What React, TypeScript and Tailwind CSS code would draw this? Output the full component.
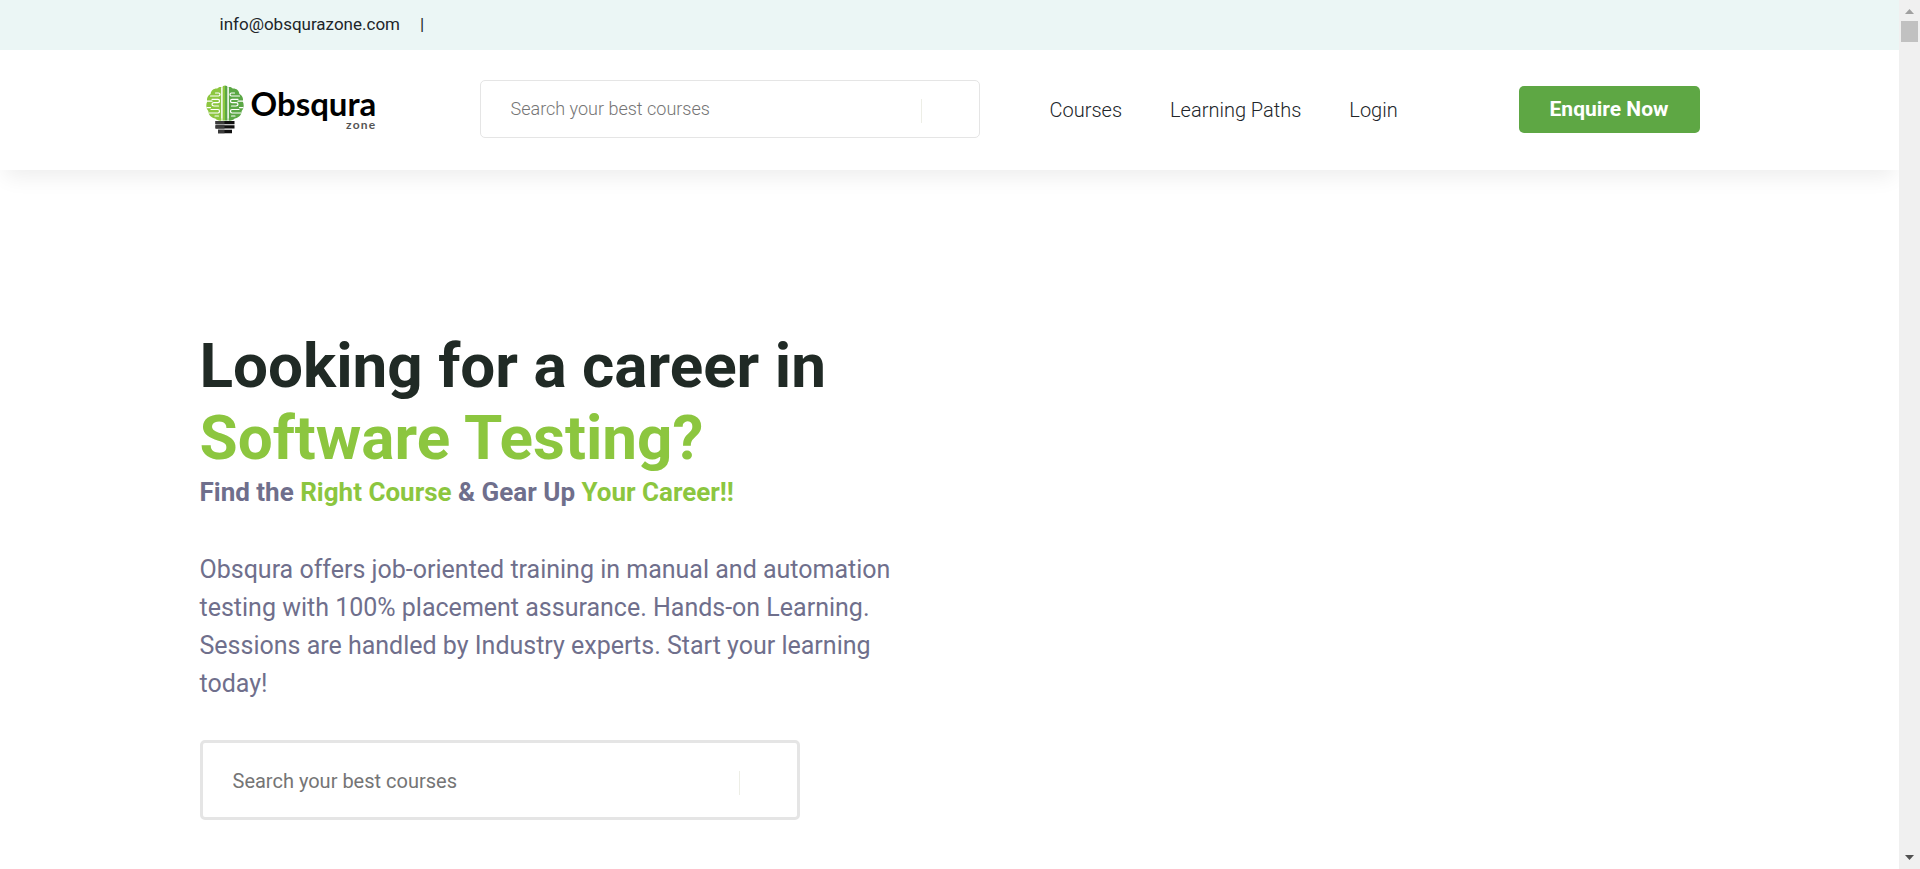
import { useId } from "react";

function BulbLogo() {
  return (
    <svg viewBox="0 0 38 49" className="h-[49px] w-[38px] shrink-0" aria-hidden="true">
      <path d="M15.400 2C13.500 1.800 12 2.300 11.300 3.600 7.500 3.400 5 5.500 4.600 9 1.500 10.500.5 13.500 1.200 16.500-.2 19.500 0 23.500 2.300 26c.1 4.500 3.600 7 7 7.600 1.300 1.600 3.800 2.200 6.100 2z" fill="#8cc63f" />
      <path d="M22.600 2C24.500 1.800 26 2.300 26.700 3.600 30.500 3.400 33 5.500 33.400 9c3.100 1.500 4.100 4.500 3.400 7.500 1.400 3 1.200 7-1.100 9.500-.1 4.500-3.600 7-7 7.600-1.300 1.600-3.800 2.200-6.100 2z" fill="#5ba745" />
      <path d="M16.500 2Q16.500.4 19 .4V35.600H16.500z" fill="#8cc63f" />
      <path d="M19 .4Q21.500.4 21.500 2V35.600H19z" fill="#5ba745" />
      <g fill="none" stroke="#fff" strokeWidth="1.200" strokeLinecap="round">
        <path d="M15.800 3V33M22.200 3V33" strokeWidth=".9" />
        <path d="M4.500 11H12.500Q14 11 14 9.500T12.500 8H9.500M.8 16.200H6M6 14.300H12Q13.500 14.300 13.500 16T12 17.700H8Q6 17.700 6 19.300T8 21H12.500M1 22.600H4.500M5 24.500H12Q13.500 24.500 13.500 26.200T12 28H3M9 31H12.500" />
        <path d="M33.500 11H25.500Q24 11 24 9.500T25.500 8H28.500M37.200 16.200H32M32 14.300H26Q24.500 14.300 24.500 16T26 17.700H30Q32 17.700 32 19.300T30 21H25.500M37 22.600H33.500M33 24.500H26Q24.500 24.500 24.500 26.200T26 28H35M29 31H25.500" />
      </g>
      <path d="M9.500 36h19v3.200h-19zM9.500 40.300h19v3.200h-19zM12 44.700h14v3.500h-14z" fill="#111" />
      <path d="M9.500 36h9v3.200h-9zM9.500 40.300h9v3.200h-9zM12 44.700h6.500v3.500h-6.500z" fill="#3a3a3a" />
    </svg>
  );
}

function SearchBox({ large = false }: { large?: boolean }) {
  const id = useId();
  return (
    <form
      role="search"
      onSubmit={(e) => e.preventDefault()}
      className={
        large
          ? "flex h-20 w-full max-w-[600px] items-center rounded-[5px] border-[3px] border-[#e5e5e5] bg-white pt-[2px] pl-[30px]"
          : "flex h-[58px] w-[500px] items-center rounded-[5px] border border-[#e5e5e5] bg-white pl-[30px]"
      }
    >
      <label htmlFor={id} className="sr-only">
        Search your best courses
      </label>
      <input
        id={id}
        type="text"
        placeholder="Search your best courses"
        className={
          large
            ? "min-w-0 flex-1 bg-transparent text-xl text-gray-700 outline-none placeholder:text-[#757575]"
            : "min-w-0 flex-1 bg-transparent text-lg font-light text-gray-700 outline-none placeholder:text-[#757575]"
        }
      />
      <button
        type="submit"
        aria-label="Search"
        className="mt-1 h-6 w-[58px] border-l border-[#edeee6]"
      />
    </form>
  );
}

function ScrollRail() {
  return (
    <div className="sticky top-0 flex h-screen w-[21px] shrink-0 flex-col items-center bg-[#f0f0f0]" aria-hidden="true">
      <div className="flex h-[21px] items-center justify-center pt-[2px]">
        <svg viewBox="0 0 9 5" className="h-[5px] w-[9px]" fill="#a0a0a0">
          <path d="M4.500 0 9 5H0z" />
        </svg>
      </div>
      <div className="h-[21px] w-[17px] bg-[#c1c1c1]" />
      <div className="mt-auto flex h-[21px] items-center justify-center pb-[2px]">
        <svg viewBox="0 0 9 5" className="h-[5px] w-[9px]" fill="#505050">
          <path d="M0 0h9L4.500 5z" />
        </svg>
      </div>
    </div>
  );
}

export default function App() {
  return (
    <div className="flex min-h-screen bg-white font-['Roboto',sans-serif]">
      <div className="min-w-0 flex-1">
        <div className="bg-[#ebf6f5]">
          <div className="mx-auto flex h-[50px] max-w-[1500px] items-center gap-5 px-5 text-[17px] text-[#212529]">
            <a href="mailto:info@obsqurazone.com">info@obsqurazone.com</a>
            <span>|</span>
          </div>
        </div>

        <header className="bg-white shadow-[0_12px_20px_-5px_rgba(0,0,0,0.07)]">
          <div className="mx-auto flex h-[120px] max-w-[1500px] items-center pb-[2px]">
            <a href="#" className="flex w-[280px] shrink-0 items-center gap-[7px] pl-[6px] font-['Lato',sans-serif]" aria-label="Obsqura zone">
              <BulbLogo />
              <span className="flex flex-col items-end font-bold text-black">
                <span className="text-[33px] leading-8">Obsqura</span>
                <span className="text-xs leading-3 tracking-widest text-[#555]">zone</span>
              </span>
            </a>
            <SearchBox />
            <nav className="flex gap-12 pt-[2px] pl-[70px] text-xl font-light text-[#212529]">
              <a href="#courses">Courses</a>
              <a href="#paths">Learning Paths</a>
              <a href="#login">Login</a>
            </nav>
            <button type="button" className="ml-auto h-[47px] w-[181px] rounded-[5px] bg-[#5ea744] pt-[2px] text-[21px] font-bold text-white">
              Enquire Now
            </button>
          </div>
        </header>

        <main className="mx-auto max-w-[1500px] pt-[160px] pb-12">
          <h1 className="text-[62px] leading-[72px] font-bold text-[#202a25]">
            Looking for a career in
            <span className="block text-[#8cc63f]">Software Testing?</span>
          </h1>
          <p className="text-[26px] leading-9 font-bold text-[#6f6f8c]">
            Find the <span className="text-[#8cc63f]">Right Course</span> &amp; Gear Up{" "}
            <span className="text-[#8cc63f]">Your Career!!</span>
          </p>
          <p className="mt-[41px] mb-[37px] max-w-[720px] text-[25px] leading-[38px] text-[#6f6f8c]">
            Obsqura offers job-oriented training in manual and automation testing with 100% placement assurance. Hands-on
            Learning. Sessions are handled by Industry experts. Start your learning today!
          </p>
          <SearchBox large />
        </main>
      </div>
      <ScrollRail />
    </div>
  );
}
